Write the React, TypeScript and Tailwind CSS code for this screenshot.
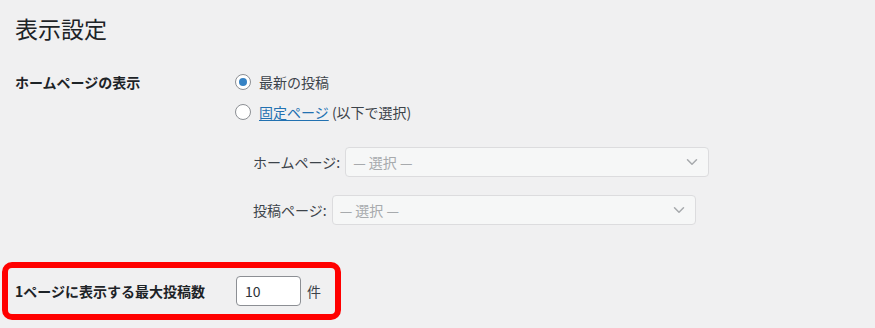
import { ChevronDown } from "lucide-react";

const font = "font-['Segoe_UI','Noto_Sans_CJK_JP',sans-serif]";

function Radio({ checked }: { checked?: boolean }) {
  return (
    <span className="flex size-4 shrink-0 items-center justify-center rounded-full border border-[#8c8f94] bg-white">
      {checked && <span className="size-2 rounded-full bg-[#3582c4]" />}
    </span>
  );
}

function DisabledSelect({ width }: { width: string }) {
  return (
    <div
      className={`flex h-[30px] items-center justify-between rounded-[4px] border border-[#dcdcde] bg-[#f6f7f7] pl-[7px] pr-[7px] text-[14px] text-[#a7aaad] ${width}`}
    >
      <span>— 選択 —</span>
      <ChevronDown className="size-[18px] text-[#a7aaad]" strokeWidth={2} aria-hidden="true" />
    </div>
  );
}

export default function App() {
  return (
    <div className={`h-[328px] w-[875px] overflow-hidden bg-[#f0f0f1] text-[#1d2327] ${font}`}>
      <div className="pl-[15px]">
        <h1 className="mt-[13px] h-[30px] text-[23px] font-normal leading-[30px]">表示設定</h1>

        {/* Homepage display */}
        <div className="mt-[29px] flex">
          <div className="w-[220px] text-[14px] font-bold leading-[20px]">ホームページの表示</div>
          <div className="flex flex-col text-[14px] leading-[20px] text-[#3c434a]">
            <label className="flex h-[20px] items-center gap-[8px]">
              <Radio checked />
              <span>最新の投稿</span>
            </label>
            <label className="mt-[10px] flex h-[20px] items-center gap-[8px]">
              <Radio />
              <span>
                <a href="#" className="text-[#2271b1] underline underline-offset-2">
                  固定ページ
                </a>{" "}
                (以下で選択)
              </span>
            </label>

            <div className="mt-[25px] flex items-center gap-[5px] pl-[18px]">
              <span>ホームページ:</span>
              <DisabledSelect width="w-[364px]" />
            </div>
            <div className="mt-[18px] flex items-center gap-[5px] pl-[18px]">
              <span>投稿ページ:</span>
              <DisabledSelect width="w-[364px]" />
            </div>
          </div>
        </div>
      </div>

      {/* Posts per page, highlighted */}
      <div className="ml-[2px] mt-[37px] flex h-[58px] w-[339px] items-center rounded-[10px] border-[6px] border-[#ff0000] pl-[7px]">
        <div className="w-[221px] text-[14px] font-bold text-[#1d2327]">1ページに表示する最大投稿数</div>
        <input
          type="number"
          defaultValue={10}
          className="h-[30px] w-[65px] rounded-[4px] border border-[#8c8f94] bg-white px-[8px] text-[14px] text-[#2c3338] [appearance:textfield]"
        />
        <span className="ml-[6px] text-[14px] text-[#3c434a]">件</span>
      </div>
    </div>
  );
}
